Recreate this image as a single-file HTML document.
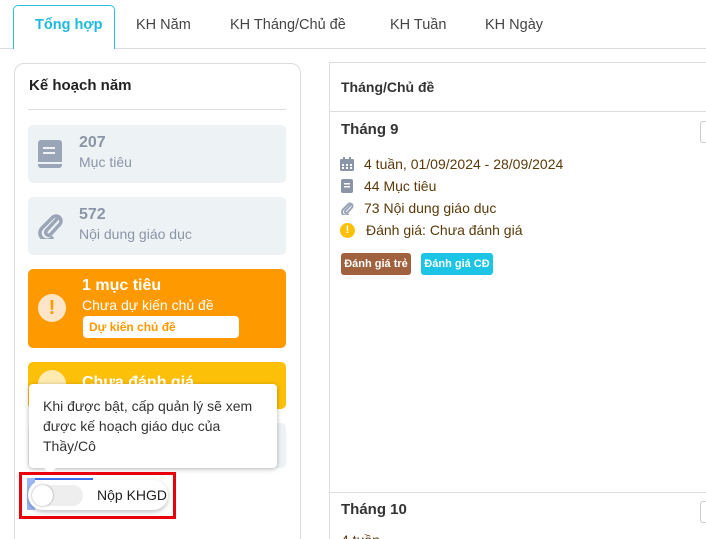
<!DOCTYPE html>
<html><head><meta charset="utf-8"><style>
*{box-sizing:border-box;margin:0;padding:0}
html,body{width:706px;height:539px;overflow:hidden}
body{background:#fff;font-family:"Liberation Sans","Noto Sans CJK SC",sans-serif;position:relative;color:#333}
.abs{position:absolute}
.tab{position:absolute;top:17px;font-size:14.5px;color:#444}
</style></head><body>
<div class="abs" style="left:0;top:48px;width:706px;height:1px;background:#dcdcdc"></div>
<div class="abs" style="left:13px;top:5px;width:102px;height:44px;border:1px solid #26c1e0;border-bottom:none;border-radius:5px 5px 0 0;background:#fff"></div>
<div class="tab" style="left:35px;color:#1fb9de;font-weight:bold">Tổng hợp</div>
<div class="tab" style="left:136px">KH Năm</div>
<div class="tab" style="left:230px">KH Tháng/Chủ đề</div>
<div class="tab" style="left:390px">KH Tuần</div>
<div class="tab" style="left:485px">KH Ngày</div>

<div class="abs" style="left:14px;top:63px;width:287px;height:500px;border:1px solid #ddd;border-radius:10px"></div>
<div class="abs" style="left:29px;top:77px;font-size:15px;font-weight:bold;color:#222">Kế hoạch năm</div>
<div class="abs" style="left:28px;top:109px;width:258px;height:1px;background:#ddd"></div>

<div class="abs" style="left:28px;top:125px;width:258px;height:58px;background:#edf2f5;border-radius:5px"></div>
<svg class="abs" style="left:38px;top:140px" width="24" height="28" viewBox="0 0 24 28"><rect x="0" y="0" width="24" height="28" rx="3" fill="#9aa5b8"/><rect x="5" y="7" width="12" height="2" fill="#edf2f5"/><rect x="5" y="12" width="12" height="2" fill="#edf2f5"/><rect x="0" y="22" width="24" height="2" fill="#edf2f5"/></svg>
<div class="abs" style="left:79px;top:134px;font-size:16px;font-weight:bold;color:#8b95a8">207</div>
<div class="abs" style="left:79px;top:154px;font-size:14px;color:#8b95a8">Mục tiêu</div>

<div class="abs" style="left:28px;top:197px;width:258px;height:58px;background:#edf2f5;border-radius:5px"></div>
<svg class="abs" style="left:37px;top:211px" width="26" height="28" viewBox="0 0 26 28"><path d="M20 8 L9 20 a3 3 0 0 0 4 4 L23 13 a5 5 0 0 0 -7 -7 L5 17 a7 7 0 0 0 10 10" fill="none" stroke="#9aa5b8" stroke-width="3.5" stroke-linecap="round"/></svg>
<div class="abs" style="left:79px;top:206px;font-size:16px;font-weight:bold;color:#8b95a8">572</div>
<div class="abs" style="left:79px;top:226px;font-size:14px;color:#8b95a8">Nội dung giáo dục</div>

<div class="abs" style="left:28px;top:269px;width:258px;height:79px;background:#fe9a00;border-radius:5px"></div>
<div class="abs" style="left:38px;top:294px;width:28px;height:28px;border-radius:50%;background:#fde6c7;color:#fe9a00;font-weight:bold;font-size:20px;text-align:center;line-height:28px">!</div>
<div class="abs" style="left:82px;top:277px;font-size:16px;font-weight:bold;color:#fff">1 mục tiêu</div>
<div class="abs" style="left:82px;top:297px;font-size:14px;color:#fff">Chưa dự kiến chủ đề</div>
<div class="abs" style="left:83px;top:316px;width:156px;height:22px;background:#fff;border-radius:4px;font-size:12px;font-weight:bold;color:#fe9a00;padding:4px 0 0 6px">Dự kiến chủ đề</div>

<div class="abs" style="left:28px;top:362px;width:258px;height:47px;background:#fdc008;border-radius:5px"></div>
<div class="abs" style="left:38px;top:370px;width:28px;height:28px;border-radius:50%;background:#fdebb0"></div>
<div class="abs" style="left:82px;top:374px;font-size:16px;font-weight:bold;color:#fff">Chưa đánh giá</div>
<div class="abs" style="left:28px;top:423px;width:258px;height:45px;background:#edf2f5;border-radius:5px"></div>

<div class="abs" style="left:29px;top:384px;width:248px;height:84px;background:#fff;border-radius:4px;box-shadow:0 1px 5px rgba(0,0,0,.3)"></div>
<div class="abs" style="left:44px;top:468px;width:0;height:0;border-left:6px solid transparent;border-right:6px solid transparent;border-top:6px solid #fff"></div>
<div class="abs" style="left:43px;top:396px;font-size:14px;line-height:20px;color:#333;width:225px">Khi được bật, cấp quản lý sẽ xem được kế hoạch giáo dục của Thầy/Cô</div>

<div class="abs" style="left:19px;top:472px;width:157px;height:47px;border:3px solid #e8000b"></div>
<div class="abs" style="left:27px;top:478px;width:66px;height:2px;background:#3b6ff5"></div>
<div class="abs" style="left:27px;top:478px;width:8px;height:32px;background:#9db7f7"></div>
<div class="abs" style="left:28px;top:480px;width:140px;height:30px;background:#fff;border-radius:15px;box-shadow:0 2px 5px rgba(0,0,0,.25)"></div>
<div class="abs" style="left:32px;top:485px;width:51px;height:21px;background:#eee;border-radius:11px"></div>
<div class="abs" style="left:32px;top:485px;width:21px;height:21px;background:#fff;border-radius:50%;box-shadow:0 0 2px rgba(0,0,0,.4)"></div>
<div class="abs" style="left:97px;top:487px;font-size:14px;color:#222">Nộp KHGD</div>

<div class="abs" style="left:329px;top:62px;width:400px;height:500px;border-left:1px solid #ddd;border-top:1px solid #ddd"></div>
<div class="abs" style="left:341px;top:79px;font-size:14px;font-weight:bold;color:#333">Tháng/Chủ đề</div>
<div class="abs" style="left:330px;top:111px;width:376px;height:1px;background:#ddd"></div>
<div class="abs" style="left:341px;top:121px;font-size:15px;font-weight:bold;color:#333">Tháng 9</div>
<div class="abs" style="left:700px;top:121px;width:10px;height:22px;border:1px solid #ccc;border-radius:3px"></div>
<svg class="abs" style="left:340px;top:157px" width="14" height="14" viewBox="0 0 14 14"><rect x="0" y="2" width="14" height="12" rx="1.5" fill="#8b95a8"/><rect x="3" y="0" width="2" height="3" fill="#8b95a8"/><rect x="9" y="0" width="2" height="3" fill="#8b95a8"/><g fill="#fff"><rect x="2" y="7" width="2" height="2"/><rect x="6" y="7" width="2" height="2"/><rect x="10" y="7" width="2" height="2"/><rect x="2" y="10" width="2" height="2"/><rect x="6" y="10" width="2" height="2"/><rect x="10" y="10" width="2" height="2"/></g></svg>
<div class="abs" style="left:364px;top:156px;font-size:14px;color:#5b3a0a">4 tuần, 01/09/2024 - 28/09/2024</div>
<svg class="abs" style="left:341px;top:179px" width="12" height="14" viewBox="0 0 12 14"><rect width="12" height="14" rx="2" fill="#8b95a8"/><rect x="3" y="4" width="6" height="1.5" fill="#fff"/><rect x="3" y="7" width="6" height="1.5" fill="#fff"/></svg>
<div class="abs" style="left:364px;top:178px;font-size:14px;color:#5b3a0a">44 Mục tiêu</div>
<svg class="abs" style="left:340px;top:201px" width="14" height="14" viewBox="0 0 26 28"><path d="M20 8 L9 20 a3 3 0 0 0 4 4 L23 13 a5 5 0 0 0 -7 -7 L5 17 a7 7 0 0 0 10 10" fill="none" stroke="#9aa5b8" stroke-width="4" stroke-linecap="round"/></svg>
<div class="abs" style="left:364px;top:200px;font-size:14px;color:#5b3a0a">73 Nội dung giáo dục</div>
<div class="abs" style="left:340px;top:223px;width:15px;height:15px;border-radius:50%;background:#fdc008;color:#fff;font-size:11px;font-weight:bold;text-align:center;line-height:15px">!</div>
<div class="abs" style="left:366px;top:222px;font-size:14px;color:#5b3a0a">Đánh giá: Chưa đánh giá</div>
<div class="abs" style="left:341px;top:253px;width:70px;height:22px;background:#a0613f;border-radius:3px;color:#fff;font-size:11px;font-weight:bold;text-align:center;line-height:22px">Đánh giá trẻ</div>
<div class="abs" style="left:421px;top:253px;width:72px;height:22px;background:#1cc4e6;border-radius:3px;color:#fff;font-size:11px;font-weight:bold;text-align:center;line-height:22px">Đánh giá CĐ</div>
<div class="abs" style="left:330px;top:492px;width:376px;height:1px;background:#ddd"></div>
<div class="abs" style="left:341px;top:501px;font-size:15px;font-weight:bold;color:#333">Tháng 10</div>
<div class="abs" style="left:700px;top:501px;width:10px;height:22px;border:1px solid #ccc;border-radius:3px"></div>
<div class="abs" style="left:341px;top:533px;width:40px;height:6px;color:#5b3a0a;font-size:14px;overflow:hidden;line-height:14px">4 tuần</div>
</body></html>
